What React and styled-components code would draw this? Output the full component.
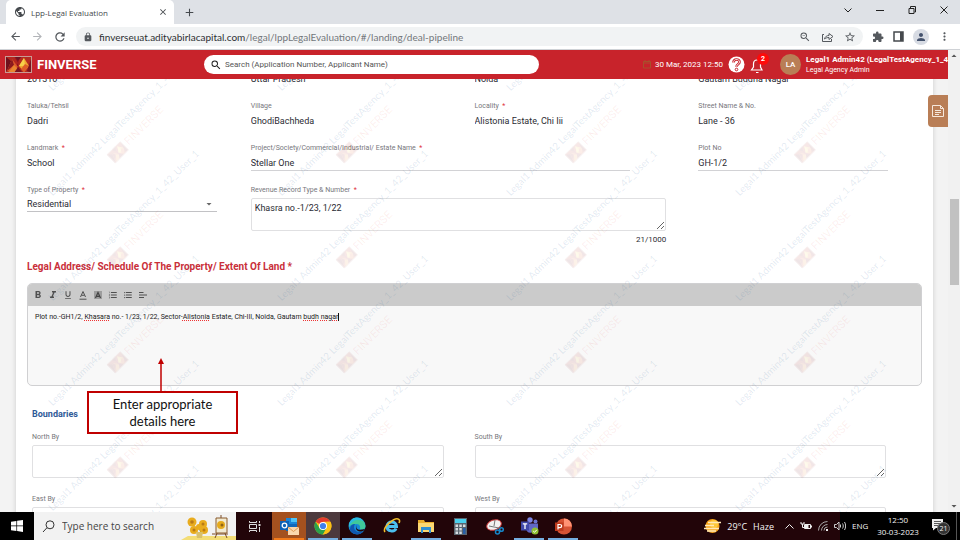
import React from "react";
import styled, { createGlobalStyle } from "styled-components";
import {
  MdArrowBack, MdArrowForward, MdRefresh, MdLock, MdSearch, MdZoomOut, MdStarBorder, MdExtension,
  MdPerson, MdMoreVert, MdFormatBold, MdFormatItalic, MdFormatUnderlined, MdFormatListNumbered,
  MdFormatListBulleted, MdClose, MdAdd, MdPublic, MdArrowDropDown, MdArrowDropUp,
} from "react-icons/md";

const GlobalStyle = createGlobalStyle`
  * { box-sizing: border-box; }
  html, body, #root { height: 100%; }
  body { margin: 0; overflow: hidden; font-family: Roboto, "Liberation Sans", sans-serif; }
  button, input, select, textarea { font: inherit; color: inherit; margin: 0; }
  button { border: 0; padding: 0; background: none; display: inline-flex; align-items: center; justify-content: center; }
  svg { display: block; flex: none; }
`;

const systemFont = `"Open Sans", "Noto Sans", sans-serif`;

const Screen = styled.div`
  height: 100vh;
  display: flex;
  flex-direction: column;
  overflow: hidden;
  background: #fff;
`;

/* Browser frame */
const TabStrip = styled.div`
  height: 24px;
  flex: none;
  display: flex;
  align-items: center;
  padding-left: 6px;
  background: #dee1e6;
  font-family: ${systemFont};
  color: #45494d;
`;
const Tab = styled.div`
  align-self: stretch;
  width: 168px;
  display: flex;
  align-items: center;
  gap: 5px;
  padding: 0 6px 0 8px;
  border-radius: 5px 5px 0 0;
  background: #fff;
  font-size: 8px;
`;
const TabTitle = styled.span`
  flex: 1;
  white-space: nowrap;
`;
const NewTab = styled.button`
  margin-left: 9px;
`;
const WindowButtons = styled.div`
  margin-left: auto;
  display: flex;
  gap: 20px;
  padding: 0 10px 4px 0;
`;
const AddressRow = styled.div`
  height: 26px;
  flex: none;
  display: flex;
  align-items: center;
  gap: 9px;
  padding: 0 9px;
  border-bottom: 1px solid #cfd2d6;
  color: #55595e;
`;
const AddressBar = styled.div`
  flex: 1;
  height: 19px;
  display: flex;
  align-items: center;
  gap: 6px;
  padding: 0 7px;
  border-radius: 10px;
  background: #f1f3f4;
`;
const Address = styled.a`
  flex: 1;
  font: 10px/16px Lato, sans-serif;
  color: #73777b;
  text-decoration: none;
  white-space: nowrap;
  b { font-weight: 400; color: #2d3033; }
`;
const AddressIcons = styled.div`
  display: flex;
  align-items: center;
  gap: 10px;
`;
const Profile = styled.button`
  width: 16px;
  height: 16px;
  border-radius: 50%;
  background: #d7dbe3;
  color: #44526d;
`;

/* Application */
const Viewport = styled.div`
  flex: 1;
  min-height: 0;
  display: flex;
`;
const AppColumn = styled.div`
  flex: 1;
  min-width: 0;
  display: flex;
  flex-direction: column;
`;
const Header = styled.header`
  height: 29px;
  flex: none;
  display: flex;
  align-items: center;
  padding-left: 5px;
  overflow: hidden;
  background: #c8232b;
  color: #fff;
`;
const Brand = styled.div`
  display: flex;
  align-items: center;
  gap: 5px;
  width: 199px;
  font-size: 13px;
  font-weight: 700;
`;
const SearchBox = styled.label`
  width: 335px;
  height: 19px;
  display: flex;
  align-items: center;
  gap: 3px;
  padding-left: 6px;
  border-radius: 10px;
  background: #fff;
  color: #222;
  input {
    flex: 1;
    border: 0;
    padding: 0;
    outline: 0;
    background: none;
    font-size: 8px;
  }
  input::placeholder { color: #555; opacity: 1; }
`;
const HeaderRight = styled.div`
  margin-left: auto;
  width: 305px;
  flex: none;
  display: flex;
  align-items: center;
  white-space: nowrap;
  > * { flex: none; }
`;
const Stamp = styled.time`
  width: 85px;
  display: flex;
  align-items: center;
  gap: 4px;
  font-size: 8px;
`;
const Bell = styled.button`
  position: relative;
  width: 14px;
  margin: 0 16px 0 5px;
`;
const BellCount = styled.span`
  position: absolute;
  top: -3px;
  right: -5px;
  width: 12px;
  height: 12px;
  border-radius: 50%;
  background: #ff0a0a;
  font-size: 7px;
  line-height: 12px;
  font-weight: 700;
`;
const Avatar = styled.span`
  width: 21px;
  height: 21px;
  margin-right: 5px;
  border-radius: 50%;
  background: #b97e56;
  font-size: 8px;
  line-height: 21px;
  font-weight: 500;
  text-align: center;
`;
const UserName = styled.div`
  font-size: 8px;
  line-height: 10px;
  font-weight: 700;
`;
const UserRole = styled.div`
  font-size: 7px;
  line-height: 10px;
`;

const Content = styled.main`
  position: relative;
  flex: 1;
  min-height: 0;
  overflow: hidden;
  background: #f3f3f3;
`;
const Card = styled.form`
  margin: -8px 15px 0 16px;
  padding: 0 11px 40px;
  background: #fff;
  box-shadow: 0 0 5px rgba(0, 0, 0, 0.16);
  color: #2b2b33;
`;
const FieldGrid = styled.div`
  display: grid;
  grid-template-columns: repeat(4, 1fr);
  row-gap: 13px;
`;
const Cell = styled.div`
  grid-column: span ${(p) => p.$span || 1};
  padding-right: ${(p) => p.$gutter || 34}px;
  display: flex;
  flex-direction: column;
`;
const Label = styled.label`
  height: 13px;
  font-size: 7px;
  line-height: 13px;
  color: #77777c;
  white-space: nowrap;
`;
const Star = styled.span`
  color: #e0343c;
`;
const TextField = styled.input`
  width: 100%;
  height: 16px;
  padding: 0;
  border: 0;
  border-bottom: 1px solid ${(p) => (p.$line ? "#d2d2d5" : "transparent")};
  outline: 0;
  background: none;
  font-size: 9px;
`;
const SelectWrap = styled.div`
  display: grid;
  align-items: center;
  border-bottom: 1px solid #c2c2c5;
  > * { grid-area: 1 / 1; }
  svg { justify-self: end; margin-right: 2px; color: #666; pointer-events: none; }
`;
const Select = styled.select`
  height: 14px;
  padding: 0;
  border: 0;
  outline: 0;
  appearance: none;
  background: none;
  font-size: 9px;
`;
const Area = styled.textarea`
  display: block;
  width: 100%;
  height: 33px;
  margin-top: 1px;
  padding: 3px;
  border: 1px solid #e0e0e2;
  border-radius: 2px;
  outline: 0;
  background: #fff;
  font-size: 9px;
  line-height: 12px;
`;
const Counter = styled.output`
  align-self: flex-end;
  margin-top: 3px;
  font-size: 8px;
  line-height: 12px;
`;
const SectionTitle = styled.h2`
  margin: 14px 0 9px;
  font-size: 10px;
  line-height: 14px;
  font-weight: 700;
  color: #c9303a;
`;
const Editor = styled.div`
  height: 103px;
  display: flex;
  flex-direction: column;
  border: 1px solid #d0d0d2;
  border-radius: 5px;
  overflow: hidden;
  background: #f8f8f8;
`;
const EditorBar = styled.div`
  height: 22px;
  display: flex;
  align-items: center;
  gap: 5px;
  padding-left: 5px;
  background: #cbcbcb;
  color: #505050;
  button { width: 10px; height: 12px; }
`;
const EditorText = styled.div`
  flex: 1;
  padding: 5px 7px;
  outline: 0;
  font-size: 7px;
  line-height: 12px;
  color: #222;
  u { text-decoration: underline dotted #e33; text-underline-offset: 1px; }
`;
const Caret = styled.span`
  border-right: 1px solid #111;
`;
const BoundsTitle = styled.h3`
  margin: 21px 0 10px 5px;
  font-size: 9px;
  line-height: 14px;
  font-weight: 700;
  color: #2f5a97;
`;
const BoundsGrid = styled.div`
  display: grid;
  grid-template-columns: 1fr 1fr;
  gap: 15px 31px;
  padding: 0 36px 0 5px;
`;
const BoundsField = styled.div`
  display: flex;
  flex-direction: column;
`;

const Watermark = styled.div`
  position: absolute;
  top: -91px;
  left: 44px;
  display: grid;
  grid-template-columns: repeat(4, 229px);
  grid-auto-rows: 105px;
  pointer-events: none;
  user-select: none;
`;
const Tile = styled.div`
  position: relative;
`;
const TileText = styled.span`
  position: absolute;
  left: 10px;
  bottom: 0;
  transform: rotate(-45deg);
  transform-origin: left bottom;
  font: 10px/12px Lato, sans-serif;
  white-space: nowrap;
  color: rgba(60, 110, 160, 0.15);
`;
const TileBrand = styled.span`
  position: absolute;
  left: 72px;
  bottom: 34px;
  display: flex;
  align-items: center;
  gap: 3px;
  transform: rotate(-45deg);
  transform-origin: left bottom;
  font-size: 11px;
  line-height: 12px;
  color: rgba(225, 70, 60, 0.09);
  svg { opacity: 0.1; }
`;
const SideTab = styled.button`
  position: absolute;
  top: 16px;
  right: 0;
  width: 20px;
  height: 32px;
  border-radius: 4px 0 0 4px;
  background: #b97e56;
`;
const Callout = styled.aside`
  position: absolute;
  top: 312px;
  left: 87px;
  width: 151px;
  padding: 3px 16px 2px;
  border: 2px solid #c00000;
  background: #fff;
  font: 13px/17px Lato, sans-serif;
  color: #111;
  text-align: center;
  svg { position: absolute; left: 68px; bottom: 100%; }
`;
const ScrollTrack = styled.div`
  width: 12px;
  flex: none;
  display: flex;
  flex-direction: column;
  align-items: center;
  background: #f1f1f1;
  color: #555;
`;
const ScrollSpace = styled.div`
  flex: ${(p) => p.$share};
`;
const ScrollThumb = styled.div`
  width: 9px;
  flex: 86;
  background: #c1c1c1;
`;

/* Desktop task bar */
const TaskBar = styled.footer`
  height: 28px;
  flex: none;
  display: flex;
  align-items: stretch;
  background: linear-gradient(to left, #000 120px, #220509 120px);
  color: #f4f4f4;
  font-family: ${systemFont};
`;
const StartButton = styled.button`
  width: 34px;
  background: #000;
`;
const TaskSearch = styled.label`
  width: 202px;
  display: flex;
  align-items: center;
  gap: 7px;
  padding-left: 8px;
  background: #f2f2f2;
  color: #333;
  input {
    flex: 1;
    min-width: 0;
    padding: 0;
    border: 0;
    outline: 0;
    background: none;
    font-size: 10px;
  }
  input::placeholder { color: #444; opacity: 1; }
`;
const TaskButton = styled.button`
  width: ${(p) => p.$wide || 34}px;
  padding-top: 2px;
  background: ${(p) => p.$fill || "none"};
  border-bottom: 2px solid transparent;
  border-image: ${(p) => (p.$bar ? `linear-gradient(90deg, transparent 3px, ${p.$bar} 3px, ${p.$bar} 31px, transparent 31px) 1` : "none")};
`;
const Weather = styled.div`
  margin-left: auto;
  display: flex;
  align-items: center;
  gap: 6px;
  font-size: 9px;
  white-space: nowrap;
`;
const Tray = styled.div`
  display: flex;
  align-items: center;
  gap: 6px;
  padding: 0 6px 0 11px;
`;
const Status = styled.div`
  width: 108px;
  display: flex;
  align-items: center;
  font-size: 8px;
  line-height: 12px;
  text-align: center;
  white-space: nowrap;
`;
const Language = styled.span`
  width: 24px;
  flex: none;
  text-align: left;
`;
const ClockText = styled.time`
  width: 44px;
  flex: none;
`;
const Notices = styled.button`
  position: relative;
  width: 20px;
  margin-left: 10px;
`;
const NoticeCount = styled.span`
  position: absolute;
  left: 7px;
  top: 6px;
  width: 13px;
  height: 13px;
  border: 1px solid #777;
  border-radius: 50%;
  background: #333;
  font-size: 7px;
  line-height: 11px;
`;
const ShowDesktop = styled.button`
  margin-left: auto;
  width: 4px;
  height: 28px;
  border-left: 1px solid #555;
`;

function Logo({ width = 27, height = 17 }) {
  return (
    <svg width={width} height={height} viewBox="0 0 27 17" aria-hidden="true">
      <rect width="27" height="17" fill="#8f1420" />
      <path d="M0 0h9l4 7-6 10H0z" fill="#b3261f" />
      <path d="M0 0l7 6-7 11z" fill="#6f101c" />
      <path d="M7 3l6 8-5 6-6-2z" fill="#dd5a2c" />
      <path d="M7 3l2 6-7 6z" fill="#8b1a1e" />
      <path d="M9 9l4 4-4 4H3z" fill="#e9862f" />
      <path d="M14 0h13v17h-9l-5-6z" fill="#b52a20" />
      <path d="M19 2l5 8-5 6-5-6z" fill="#f0a830" />
      <path d="M19 2l1 8-6 0z" fill="#f7d14a" />
      <path d="M24 10l-5 6-3-3 4-5z" fill="#df5c28" />
      <path d="M27 0v17l-5-2z" fill="#7c1420" />
      <path d="M10 0h7l-4 5z" fill="#731322" />
      <path d="M13 11l4 6H9z" fill="#7b1420" />
      <rect x=".5" y=".5" width="26" height="16" fill="none" stroke="#c99a94" />
    </svg>
  );
}

function TextInput({ id, label, name, required, value, line, span, gutter }) {
  return (
    <Cell $span={span} $gutter={gutter}>
      {label && <Label htmlFor={id}>{label} {required && <Star>&nbsp;*</Star>}</Label>}
      <TextField id={id} aria-label={name} defaultValue={value} $line={line} />
    </Cell>
  );
}

function Bound({ id, label }) {
  return (
    <BoundsField>
      <Label htmlFor={id}>{label}</Label>
      <Area id={id} />
    </BoundsField>
  );
}

function BrowserFrame() {
  return (
    <>
      <TabStrip>
        <Tab>
          <MdPublic size={12} />
          <TabTitle>Lpp-Legal Evaluation</TabTitle>
          <button aria-label="Close tab"><MdClose size={10} /></button>
        </Tab>
        <NewTab aria-label="New tab"><MdAdd size={13} /></NewTab>
        <WindowButtons>
          <button aria-label="Search tabs"><svg width="12" height="12" viewBox="0 0 12 12" fill="none" stroke="#222"><path d="M2.500 4.500L6 8l3.500-3.500" /></svg></button>
          <button aria-label="Minimize"><svg width="12" height="12" viewBox="0 0 12 12" stroke="#222"><path d="M2 6.500h8" /></svg></button>
          <button aria-label="Restore"><svg width="12" height="12" viewBox="0 0 12 12" fill="none" stroke="#222"><path d="M3 4.500h5v5H3zM4.500 4V2.500h5V8H8.500" /></svg></button>
          <button aria-label="Close"><svg width="12" height="12" viewBox="0 0 12 12" stroke="#222"><path d="M2.500 2.500l7 7M9.500 2.500l-7 7" /></svg></button>
        </WindowButtons>
      </TabStrip>
      <AddressRow>
        <button aria-label="Back"><MdArrowBack size={13} /></button>
        <button aria-label="Forward"><MdArrowForward size={13} color="#b2b4b8" /></button>
        <button aria-label="Reload"><MdRefresh size={14} /></button>
        <AddressBar>
          <MdLock size={10} />
          <Address href="#/landing/deal-pipeline"><b>finverseuat.adityabirlacapital.com</b>/legal/lppLegalEvaluation/#/landing/deal-pipeline</Address>
          <AddressIcons>
            <button aria-label="Zoom"><MdZoomOut size={12} /></button>
            <button aria-label="Share">
              <svg width="13" height="12" viewBox="0 0 13 12" fill="none" stroke="currentColor"><path d="M3 3.500H1.500v7h9V8M3.500 8C4 5.500 6 4.500 8 4.500v-2l4 3-4 3v-2C6.500 6.500 5 6.800 3.500 8z" /></svg>
            </button>
            <button aria-label="Bookmark"><MdStarBorder size={12} /></button>
          </AddressIcons>
        </AddressBar>
        <button aria-label="Extensions"><MdExtension size={12} /></button>
        <button aria-label="Side panel">
          <svg width="11" height="11" viewBox="0 0 11 11"><path d="M1 1h9v9H1z" fill="none" stroke="#45494d" strokeWidth="1.500" /><path d="M7 1h3v9H7z" fill="#45494d" /></svg>
        </button>
        <Profile aria-label="Profile"><MdPerson size={12} /></Profile>
        <button aria-label="Menu"><MdMoreVert size={13} /></button>
      </AddressRow>
    </>
  );
}

function AppHeader() {
  return (
    <Header>
      <Brand><Logo /> FINVERSE</Brand>
      <SearchBox>
        <MdSearch size={12} />
        <input aria-label="Search" placeholder="Search (Application Number, Applicant Name)" />
      </SearchBox>
      <HeaderRight>
        <Stamp>
          <svg width="8" height="9" viewBox="0 0 8 9" fill="none" stroke="#a8502c"><path d="M.5 1.500h7v6.500h-7zM.5 3h7M2 0v2M6 0v2" /></svg>
          30 Mar, 2023 12:50
        </Stamp>
        <button aria-label="Help">
          <svg width="17" height="17" viewBox="0 0 17 17"><circle cx="8.500" cy="8.500" r="8" fill="#fff" /><path d="M5.500 6.500c0-4 6-4 6-.5 0 2.500-3 2-3 4.800" fill="none" stroke="#c8232b" strokeWidth="2.600" /><path d="M5.500 6.500c0-4 6-4 6-.5 0 2.500-3 2-3 4.500" fill="none" stroke="#fff" strokeWidth=".8" /><circle cx="8.500" cy="13.500" r="1.300" fill="#fff" stroke="#c8232b" /></svg>
        </button>
        <Bell aria-label="Notifications, 2 new">
          <svg width="14" height="18" viewBox="0 0 14 18" fill="none" stroke="#fff" strokeWidth="1.200"><path d="M1.500 14h10.500L10.500 11V7.500C10.500 5 9 4 7 4S3.500 5.500 3.500 8v3zM6 16.500h2.500" /></svg>
          <BellCount>2</BellCount>
        </Bell>
        <Avatar>LA</Avatar>
        <div>
          <UserName>Legal1 Admin42 (LegalTestAgency_1_42_User_1)</UserName>
          <UserRole>Legal Agency Admin</UserRole>
        </div>
      </HeaderRight>
    </Header>
  );
}

function LegalForm() {
  return (
    <Card>
      <FieldGrid>
        <TextInput id="pin" name="Pincode" value="201310" />
        <TextInput id="state" name="State" value="Uttar Pradesh" />
        <TextInput id="city" name="City" value="Noida" />
        <TextInput id="district" name="District" value="Gautam Buddha Nagar" />
        <TextInput id="taluka" label="Taluka/Tehsil" value="Dadri" />
        <TextInput id="village" label="Village" value="GhodiBachheda" />
        <TextInput id="locality" label="Locality" required value="Alistonia Estate, Chi Iii" />
        <TextInput id="street" label="Street Name & No." value="Lane - 36" />
        <TextInput id="landmark" label="Landmark" required value="School" />
        <TextInput id="project" label="Project/Society/Commercial/Industrial/ Estate Name" required value="Stellar One" line span={2} gutter={68} />
        <TextInput id="plot" label="Plot No" value="GH-1/2" line />
        <Cell>
          <Label htmlFor="ptype">Type of Property <Star>&nbsp;*</Star></Label>
          <SelectWrap>
            <Select id="ptype" defaultValue="Residential"><option>Residential</option></Select>
            <MdArrowDropDown size={12} />
          </SelectWrap>
        </Cell>
        <Cell $span={2} $gutter={32}>
          <Label htmlFor="revenue">Revenue Record Type &amp; Number <Star>&nbsp;*</Star></Label>
          <Area id="revenue" defaultValue="Khasra no.-1/23, 1/22" />
          <Counter htmlFor="revenue">21/1000</Counter>
        </Cell>
      </FieldGrid>
      <SectionTitle id="address-title">Legal Address/ Schedule Of The Property/ Extent Of Land *</SectionTitle>
      <Editor>
        <EditorBar role="toolbar" aria-label="Formatting">
          <button type="button" aria-label="Bold"><MdFormatBold size={12} /></button>
          <button type="button" aria-label="Italic"><MdFormatItalic size={12} /></button>
          <button type="button" aria-label="Underline"><MdFormatUnderlined size={10} /></button>
          <button type="button" aria-label="Text colour">
            <svg width="8" height="10" viewBox="0 0 8 10" fill="none" stroke="currentColor"><path d="M1.500 7L4 1.500 6.500 7M2.500 5.300h3M.5 9.200h7" /></svg>
          </button>
          <button type="button" aria-label="Highlight">
            <svg width="8" height="8" viewBox="0 0 8 8"><path d="M0 0h8v8H0z" fill="#9d9d9d" /><path d="M1.500 7L4 1.500 6.500 7M2.500 5.300h3" fill="none" stroke="#444" strokeWidth="1.200" /></svg>
          </button>
          <button type="button" aria-label="Numbered list"><MdFormatListNumbered size={10} /></button>
          <button type="button" aria-label="Bulleted list"><MdFormatListBulleted size={10} /></button>
          <button type="button" aria-label="Align left">
            <svg width="8" height="8" viewBox="0 0 8 8" stroke="currentColor"><path d="M0 1.500h4.500M0 4h8M0 6.500h5" /></svg>
          </button>
        </EditorBar>
        <EditorText role="textbox" aria-labelledby="address-title" contentEditable suppressContentEditableWarning spellCheck={false}>
          Plot no.-GH1/2, <u>Khasara</u> no.- 1/23, 1/22, Sector-<u>Alistonia</u> Estate, Chi-III, Noida, Gautam <u>budh</u> <u>nagar</u><Caret />
        </EditorText>
      </Editor>
      <BoundsTitle>Boundaries</BoundsTitle>
      <BoundsGrid>
        <Bound id="north" label="North By" />
        <Bound id="south" label="South By" />
        <Bound id="east" label="East By" />
        <Bound id="west" label="West By" />
      </BoundsGrid>
    </Card>
  );
}

const tiles = Array.from({ length: 24 }, (_, i) => i);

function Desktop() {
  const blue = "#75aee0";
  return (
    <TaskBar>
      <StartButton aria-label="Start">
        <svg width="12" height="12" viewBox="0 0 12 12" fill="#fff"><path d="M0 1.700l5.400-.8v4.700H0zM6.100.8L12 0v5.600H6.100zM0 6.300h5.400V11L0 10.200zM6.100 6.300H12V12l-5.900-.9z" /></svg>
      </StartButton>
      <TaskSearch>
        <svg width="13" height="13" viewBox="0 0 13 13" fill="none" stroke="#333"><circle cx="8" cy="4.800" r="4" /><path d="M5 7.700L1 12" /></svg>
        <input aria-label="Type here to search" placeholder="Type here to search" />
        <svg width="55" height="28" viewBox="0 0 55 28" aria-hidden="true">
          <path d="M0 28l7-4h48v4z" fill="#f3dd76" />
          <path d="M18 15l2 5 3-6" fill="none" stroke="#5c7a3a" strokeWidth="1.500" />
          <g fill="#e9ac1e"><circle cx="11" cy="10" r="4.500" /><circle cx="22" cy="12" r="4" /><circle cx="13" cy="18" r="4" /><circle cx="23" cy="18" r="4" /><circle cx="18" cy="15" r="3" /></g>
          <g fill="#b97a17"><circle cx="11" cy="10" r="1.800" /><circle cx="22" cy="12" r="1.500" /><circle cx="13" cy="18" r="1.500" /><circle cx="23" cy="18" r="1.500" /></g>
          <path d="M15 20h7l-1 6h-5z" fill="#d9c06a" />
          <path d="M34 26l3-7M46 26l-3-7M40 3v3M31 22h16" stroke="#7b4b24" fill="none" />
          <path d="M35 6h11v15H35z" fill="#f1ead2" stroke="#8a5a2c" />
          <circle cx="40" cy="13" r="4" fill="#e6aa1c" /><circle cx="41" cy="13" r="1.500" fill="#8f6316" />
        </svg>
      </TaskSearch>
      <TaskButton $wide={36} aria-label="Task view">
        <svg width="13" height="13" viewBox="0 0 13 13" fill="none" stroke="#ddd"><path d="M1.500 1v1.500h7V1M1.500 4.500h7v4h-7zM1.500 12v-1.500h7V12M11.500 1v2M11.500 7v5" /><path d="M10.500 4h2v2h-2z" fill="#ddd" stroke="none" /></svg>
      </TaskButton>
      <TaskButton $fill="#a4511f" $bar="#f27a1a" aria-label="Outlook">
        <svg width="20" height="20" viewBox="0 0 20 20"><path d="M7 2h11v9H7z" fill="#1a86d9" /><path d="M12 2h6v4h-6z" fill="#50c4f5" /><path d="M7 8h11v7H7z" fill="#1268b8" /><path d="M1 5h9v9H1z" fill="#0f62b5" /><circle cx="5.500" cy="9.500" r="2.300" fill="none" stroke="#fff" strokeWidth="1.300" /><path d="M9 11h11v8H9z" fill="#fbd7ac" /><path d="M9 11l5.500 4.500L20 11" fill="none" stroke="#df9a52" /></svg>
      </TaskButton>
      <TaskButton $fill="#4c393d" $bar={blue} aria-label="Chrome">
        <svg width="18" height="18" viewBox="0 0 18 18"><circle cx="9" cy="9" r="8.500" fill="#fbc116" /><path d="M9 9L1.600 4.700A8.500 8.500 0 0 1 16.400 4.800H9z" fill="#e33b2e" /><path d="M9 9l0 8.500A8.500 8.500 0 0 1 1.600 4.700L5.500 11z" fill="#2ba24c" /><path d="M9 17.500L12.500 11 9 9l-3.500 2 1.500 3z" fill="#2ba24c" /><path d="M9 17.500L12.800 11V4.800h3.600A8.500 8.500 0 0 1 9 17.500z" fill="#fbc116" /><circle cx="9" cy="9" r="4" fill="#fff" /><circle cx="9" cy="9" r="3.100" fill="#3f80ec" /></svg>
      </TaskButton>
      <TaskButton $bar={blue} aria-label="Edge">
        <svg width="18" height="18" viewBox="0 0 18 18"><circle cx="9" cy="9" r="8.500" fill="#168ad6" /><path d="M1 7a8.500 8.500 0 0 1 16.500 2c0 3-2.500 4-6 3.500 1.500-2 .5-5.500-3-5.500-3.500-.3-6 1-7.500 3z" fill="#40c99a" /><path d="M1 7C3-1 13-1 15 4 11 2 4 2 1 10z" fill="#2abbe0" /><path d="M7 7c-3 4 1 10 8 7.500C12 19 4 18 2 13c0-4 2-6 5-6z" fill="#1057b0" /><path d="M9 8c-2 4 1 6 8 4-1 2-3 2.500-5 2.500C8 14 7 11 9 8z" fill="#220509" /></svg>
      </TaskButton>
      <TaskButton $wide={35} aria-label="Internet Explorer">
        <svg width="18" height="18" viewBox="0 0 18 18" fill="none"><path d="M3.500 9.500h10c0-6-9.500-6-9.500 0 0 5 7.500 6 9 2" stroke="#4cc0ef" strokeWidth="3" /><path d="M2 15C-1 11 12-1 16 2.500c1 1 .5 2.500 0 3.500" stroke="#f1bd2b" strokeWidth="1.600" /></svg>
      </TaskButton>
      <TaskButton $bar={blue} aria-label="File Explorer">
        <svg width="16" height="16" viewBox="0 0 16 16"><path d="M0 2h6l1 2h9v10H0z" fill="#e9ad2c" /><path d="M0 5h16v9H0z" fill="#fbd873" /><path d="M3 9h10v6h-2v-3H5v3H3z" fill="#2f8fd2" /></svg>
      </TaskButton>
      <TaskButton $wide={35} aria-label="Calculator">
        <svg width="13" height="17" viewBox="0 0 13 17"><path d="M0 0h13v17H0z" fill="#59656f" /><path d="M1 1h11v4H1z" fill="#4cd0ed" /><path d="M1.500 6.500h2.500V9H1.500zM5.300 6.500h2.500V9H5.300zM9 6.500h2.500V9H9zM1.500 10h2.500v2.500H1.500zM5.300 10h2.500v2.500H5.300zM1.500 13.500h2.500V16H1.500zM5.300 13.500h2.500V16H5.300z" fill="#d7dde2" /><path d="M9 10h2.500v6H9z" fill="#285fa7" /></svg>
      </TaskButton>
      <TaskButton aria-label="Snipping Tool">
        <svg width="18" height="17" viewBox="0 0 18 17" fill="none"><ellipse cx="8" cy="7" rx="7.500" ry="5" transform="rotate(-20 8 7)" fill="#f2f2f2" stroke="#ca3a3a" /><path d="M3 8l10 2M9 2L8 8" stroke="#777" /><circle cx="11.500" cy="14" r="2" stroke="#1686c8" strokeWidth="1.500" /><circle cx="15.500" cy="11.500" r="1.800" stroke="#1686c8" strokeWidth="1.500" /></svg>
      </TaskButton>
      <TaskButton $bar={blue} aria-label="Teams">
        <svg width="19" height="18" viewBox="0 0 19 18"><circle cx="15.500" cy="4.500" r="2" fill="#6b72d0" /><circle cx="10" cy="3" r="2.700" fill="#7c84e4" /><path d="M6 6.500h12v6c0 3-4 4-5 2-3 3-7 0-7-3z" fill="#6067c6" /><path d="M1 4.500h8v9H1z" fill="#4048a9" /><path d="M2.800 6.800h4.400M5 7v5" stroke="#fff" strokeWidth="1.300" /><circle cx="15" cy="14" r="3.500" fill="#8fbf35" /><path d="M13.200 14l1.300 1.300 2.300-2.500" fill="none" stroke="#fff" /></svg>
      </TaskButton>
      <TaskButton $bar={blue} aria-label="PowerPoint">
        <svg width="17" height="17" viewBox="0 0 17 17"><circle cx="9" cy="8.500" r="8" fill="#d65334" /><path d="M9 .5a8 8 0 0 1 8 8H9z" fill="#ff9274" /><path d="M0 4.500h8.500V13H0z" fill="#bd3a1d" /><path d="M3 11.500v-5h1.800c2.500 0 2.500 3.200 0 3.200H3" fill="none" stroke="#fff" strokeWidth="1.200" /></svg>
      </TaskButton>
      <Weather>
        <svg width="17" height="16" viewBox="0 0 17 16"><circle cx="8.500" cy="8" r="7" fill="#f8a51b" /><circle cx="10" cy="6" r="4" fill="#fdc83a" /><path d="M4 4.500h13M1 7.500h9M0 10.500h15M3 13h9" stroke="#ffe9b8" strokeWidth="1.300" /></svg>
        <span>29°C</span>
        <span>Haze</span>
      </Weather>
      <Tray>
        <svg width="9" height="9" viewBox="0 0 9 9" fill="none" stroke="#eee"><path d="M.5 6.500l4-4 4 4" /></svg>
        <svg width="12" height="10" viewBox="0 0 12 10" fill="none" stroke="#eee"><path d="M4.500 3.500h6v4h-6zM11.500 4.500v2M1 1v2h3V1M2.500 3v3.500h2" /><path d="M5 4h3v3H5z" fill="#eee" /></svg>
        <svg width="10" height="10" viewBox="0 0 10 10" fill="none" stroke="#aaa"><path d="M.5 9.500A9 9 0 0 1 9.500.5M3.500 9.500a6 6 0 0 1 6-6M6 9.500a3.500 3.500 0 0 1 3.500-3.500" /><path d="M8 8h2v2H8z" fill="#eee" stroke="none" /></svg>
        <svg width="12" height="10" viewBox="0 0 12 10" fill="none" stroke="#ccc"><path d="M.5 3.500h2l2.500-2.500v8L2.500 6.500h-2zM6.500 3.500v3M8.500 2.500c1 1.500 1 3.500 0 5M10.500 1c1.500 2.500 1.500 5.500 0 8" /></svg>
      </Tray>
      <Status>
        <Language>ENG</Language>
        <ClockText>12:50<br />30-03-2023</ClockText>
        <Notices aria-label="21 notifications">
          <svg width="20" height="20" viewBox="0 0 20 20"><path d="M2 3h11v9H6l-3 2.500V12H2z" fill="#eee" /><path d="M4 5.500h7M4 7.500h7M4 9.500h5" stroke="#333" strokeWidth=".8" /></svg>
          <NoticeCount>21</NoticeCount>
        </Notices>
        <ShowDesktop aria-label="Show desktop" />
      </Status>
    </TaskBar>
  );
}

export default function App() {
  return (
    <Screen>
      <GlobalStyle />
      <BrowserFrame />
      <Viewport>
        <AppColumn>
          <AppHeader />
          <Content>
            <LegalForm />
            <Watermark aria-hidden="true">
              {tiles.map((i) => (
                <Tile key={i}>
                  <TileText>Legal1 Admin42 LegalTestAgency_1_42_User_1</TileText>
                  <TileBrand><Logo width={19} height={14} /> FINVERSE</TileBrand>
                </Tile>
              ))}
            </Watermark>
            <SideTab aria-label="Notes">
              <svg width="12" height="12" viewBox="0 0 12 12" fill="none" stroke="#f6e8dc"><path d="M.5.5h8l3 3v8H.5zM8.500.5v3h3M3 5.500h6M3 7.500h6M3 9.500h4" /></svg>
            </SideTab>
            <Callout>
              <svg width="8" height="35" viewBox="0 0 8 35"><path d="M4 5v30" stroke="#c00000" strokeWidth="1.500" /><path d="M4 0l3 6H1z" fill="#c00000" /></svg>
              Enter appropriate details here
            </Callout>
          </Content>
        </AppColumn>
        <ScrollTrack aria-hidden="true">
          <MdArrowDropUp size={12} />
          <ScrollSpace $share={137} />
          <ScrollThumb />
          <ScrollSpace $share={215} />
          <MdArrowDropDown size={12} />
        </ScrollTrack>
      </Viewport>
      <Desktop />
    </Screen>
  );
}
